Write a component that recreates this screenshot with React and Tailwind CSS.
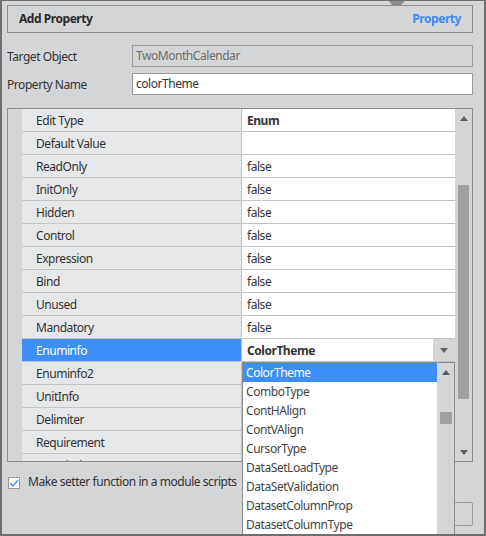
import React from "react";

const rows = [
  ["Edit Type", "Enum", true],
  ["Default Value", ""],
  ["ReadOnly", "false"],
  ["InitOnly", "false"],
  ["Hidden", "false"],
  ["Control", "false"],
  ["Expression", "false"],
  ["Bind", "false"],
  ["Unused", "false"],
  ["Mandatory", "false"],
  ["Enuminfo", "ColorTheme", true, true],
  ["Enuminfo2", ""],
  ["UnitInfo", ""],
  ["Delimiter", ""],
  ["Requirement", ""],
  ["Description", ""],
];

const items = [
  "ColorTheme",
  "ComboType",
  "ContHAlign",
  "ContVAlign",
  "CursorType",
  "DataSetLoadType",
  "DataSetValidation",
  "DatasetColumnProp",
  "DatasetColumnType",
  "DatasetRowType",
];

function Up() {
  return (
    <svg width="8" height="5" viewBox="0 0 8 5">
      <path d="M0 5 L4 0 L8 5 Z" fill="#5f5f5f" />
    </svg>
  );
}

function Down() {
  return (
    <svg width="8" height="5" viewBox="0 0 8 5">
      <path d="M0 0 L8 0 L4 5 Z" fill="#5f5f5f" />
    </svg>
  );
}

export default function App() {
  return (
    <div
      className="relative w-[486px] h-[536px] overflow-hidden bg-[#d4d5d7] border-2 border-t border-[#6e6e6e] pl-[5px] pt-[4px] text-[12px] tracking-[-0.45px] text-[#333]"
      style={{ fontFamily: '"Noto Sans", "Open Sans", sans-serif' }}
    >
      <svg className="absolute top-0 left-[387px]" width="16" height="4" viewBox="0 0 16 4">
        <path d="M0 0 L16 0 L12 4 L3 4 Z" fill="#8d8d8d" />
      </svg>

      <div className="w-[466px] h-[28px] border border-[#8c8c8c] flex items-center justify-between px-[11px] font-bold">
        <span className="text-[#2b2b2b]">Add Property</span>
        <span className="text-[#3b8cf2]">Property</span>
      </div>

      <div className="mt-[12px] flex items-center w-[466px] h-[22px]">
        <div className="w-[125px] pt-[1px]">Target Object</div>
        <div className="flex-1 h-full border border-[#9a9a9a] flex items-center px-[3px] text-[#6b6b6b]">
          TwoMonthCalendar
        </div>
      </div>
      <div className="mt-[6px] flex items-center w-[466px] h-[22px]">
        <div className="w-[125px] pt-[1px]">Property Name</div>
        <div className="flex-1 h-full border border-[#9a9a9a] bg-white flex items-center px-[3px]">
          colorTheme
        </div>
      </div>

      <div className="mt-[13px] w-[466px] h-[354px] border border-[#8c8c8c] flex overflow-hidden">
        <div className="w-[14px] bg-[#d4d5d7]" />
        <div className="w-[433px] flex flex-col">
          {rows.map(([name, value, bold, sel]) => (
            <div key={name} className="flex h-[23px] shrink-0">
              <div
                className={`w-[220px] pl-[14px] pt-[1px] flex items-center border-b border-r border-[#c3c3c3] ${
                  sel ? "bg-[#3b8ff6] text-white" : "bg-[#e6e7e8]"
                }`}
              >
                {name}
              </div>
              <div
                className={`flex-1 flex items-center bg-white border-b border-[#c3c3c3] ${
                  bold ? "font-bold" : ""
                }`}
              >
                <span className="pl-[5px] pt-[1px] flex-1">{value}</span>
                {sel && (
                  <span className="w-[22px] h-full bg-[#d4d5d7] flex items-center justify-center">
                    <Down />
                  </span>
                )}
              </div>
            </div>
          ))}
        </div>
        <div className="w-[17px] flex flex-col items-center bg-[#d4d5d7]">
          <div className="h-[18px] flex items-center">
            <Up />
          </div>
          <div className="mt-[58px] w-[11px] h-[214px] bg-[#a0a0a0]" />
          <div className="mt-auto h-[18px] flex items-center">
            <Down />
          </div>
        </div>
      </div>

      <div className="mt-[12px] flex items-center gap-[8px] pl-[1px]">
        <div className="w-[12px] h-[12px] bg-white border border-[#9a9a9a] flex items-center justify-center">
          <svg width="10" height="8" viewBox="0 0 10 8">
            <path d="M1 4 L4 7 L9 1" fill="none" stroke="#3b8cf2" strokeWidth="1.2" />
          </svg>
        </div>
        <span className="-mt-[1px]">Make setter function in a module scripts</span>
      </div>

      <div className="mt-[11px] w-[466px] flex justify-end">
        <div className="w-[80px] h-[24px] border border-[#9a9a9a] rounded-[2px]" />
      </div>

      <div className="absolute left-[240px] top-[361px] w-[213px] h-[180px] bg-white border border-[#8c8c8c] flex">
        <div className="flex-1 flex flex-col">
          {items.map((it, i) => (
            <div
              key={it}
              className={`h-[19px] shrink-0 flex items-center pl-[3px] pt-[1px] ${
                i === 0 ? "bg-[#3b8ff6] text-white" : "text-[#444]"
              }`}
            >
              {it}
            </div>
          ))}
        </div>
        <div className="w-[17px] bg-[#d4d5d7] flex flex-col items-center">
          <div className="h-[19px] flex items-center">
            <Up />
          </div>
          <div className="mt-[30px] w-[12px] h-[12px] bg-[#a0a0a0]" />
        </div>
      </div>
    </div>
  );
}
